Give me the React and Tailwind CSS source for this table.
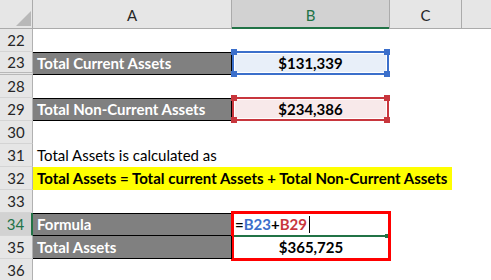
import React from 'react';

function RowNum({ n, active, hidden }) {
  const sep = hidden ? ' border-b-[3px] border-double border-b-[#b8b8b8]' : ' border-b border-b-[#d4d4d4]';
  return (
    <div
      className={
        (active
          ? 'flex items-center justify-center bg-[#d2d2d2] text-[#217346] border-r-2 border-[#217346]'
          : 'flex items-center justify-center bg-[#e6e6e6] text-[#262626] border-r border-[#b1b1b1]') + sep
      }
    >
      {n}
    </div>
  );
}

function GrayCell({ children, first }) {
  return (
    <div
      className={
        'flex items-center pl-[4px] bg-[#808080] text-white font-bold border-b border-r border-black ' +
        (first ? 'border-t' : '')
      }
    >
      {children}
    </div>
  );
}

function Handle({ className, color }) {
  return <span className={'absolute w-[6px] h-[6px] ' + color + ' ' + className} />;
}

function RefCell({ value, border, fill, handle }) {
  return (
    <div className={'relative flex border-2 -mt-px ' + border}>
      <div className={'flex-1 m-px flex items-center justify-center font-bold text-black ' + fill}>
        {value}
      </div>
      <Handle color={handle} className="-left-[3px] -top-[4px]" />
      <Handle color={handle} className="-right-[3px] -top-[4px]" />
      <Handle color={handle} className="-left-[3px] -bottom-[4px]" />
      <Handle color={handle} className="-right-[3px] -bottom-[4px]" />
    </div>
  );
}

const Empty = () => <div />;

export default function App() {
  return (
    <div className="w-[491px] h-[280px] overflow-hidden bg-white font-['Lato',sans-serif] text-[15px] leading-none text-black">
      <div className="grid grid-cols-[33px_199px_157px_73px_1fr] grid-rows-[29px_repeat(11,23px)]">
        {/* header row */}
        <div className="relative bg-[#e6e6e6] border-r border-b border-[#ababab]">
          <svg className="absolute left-0 top-0" width="33" height="29" viewBox="0 0 33 29">
            <polygon points="16,26 31,11 31,26" fill="#b8b8b8" />
          </svg>
        </div>
        <div className="flex items-center justify-center pt-[3px] bg-[#e6e6e6] text-[#262626] border-r border-b border-[#ababab]">
          A
        </div>
        <div className="flex items-center justify-center pt-[3px] bg-[#d2d2d2] text-[#217346] border-b-2 border-[#217346]">
          B
        </div>
        <div className="flex items-center justify-center pt-[3px] bg-[#e6e6e6] text-[#262626] border-l border-r border-b border-[#ababab]">
          C
        </div>
        <div className="bg-[#e6e6e6] border-b border-[#ababab]" />

        {/* 22 */}
        <RowNum n="22" />
        <Empty /><Empty /><Empty /><Empty />

        {/* 23 */}
        <RowNum n="23" hidden />
        <GrayCell first>Total Current Assets</GrayCell>
        <RefCell value="$131,339" border="border-[#3b6fcb]" fill="bg-[#e8eff9]" handle="bg-[#3b6fcb]" />
        <Empty /><Empty />

        {/* 28 */}
        <RowNum n="28" />
        <Empty /><Empty /><Empty /><Empty />

        {/* 29 */}
        <RowNum n="29" />
        <GrayCell first>Total Non-Current Assets</GrayCell>
        <RefCell value="$234,386" border="border-[#c8363d]" fill="bg-[#f8e9ea]" handle="bg-[#c8363d]" />
        <Empty /><Empty />

        {/* 30 */}
        <RowNum n="30" />
        <Empty /><Empty /><Empty /><Empty />

        {/* 31 */}
        <RowNum n="31" />
        <div className="col-span-4 flex items-center pl-[4px] whitespace-nowrap">Total Assets is calculated as</div>

        {/* 32 */}
        <RowNum n="32" />
        <div className="col-span-4 flex items-stretch">
          <span className="flex items-center pl-[4px] pr-[5px] bg-[#ffff00] font-bold whitespace-nowrap">
            Total Assets = Total current Assets + Total Non-Current Assets
          </span>
        </div>

        {/* 33 */}
        <RowNum n="33" />
        <Empty /><Empty /><Empty /><Empty />

        {/* 34 */}
        <RowNum n="34" active />
        <GrayCell first>Formula</GrayCell>
        <div className="row-span-2 -my-[2px] -ml-px -mr-[2px] flex flex-col border-[3px] border-[#ff0000] font-bold">
          <div className="flex-1 flex items-center pl-px">
            <span>=</span>
            <span className="text-[#3c6fcb]">B23</span>
            <span>+</span>
            <span className="text-[#c8363d]">B29</span>
            <span className="ml-[2px] w-px h-[17px] bg-black" />
          </div>
          <div className="relative h-[2px] mr-[3px] bg-[#217346]">
            <span className="absolute -right-[3px] -top-px w-[3px] h-[4px] bg-[#217346]" />
          </div>
          <div className="flex-1 flex items-center justify-center">$365,725</div>
        </div>
        <Empty /><Empty />

        {/* 35 */}
        <RowNum n="35" />
        <GrayCell>Total Assets</GrayCell>
        <Empty /><Empty />

        {/* 36 */}
        <RowNum n="36" />
        <Empty /><Empty /><Empty /><Empty />
      </div>
    </div>
  );
}
